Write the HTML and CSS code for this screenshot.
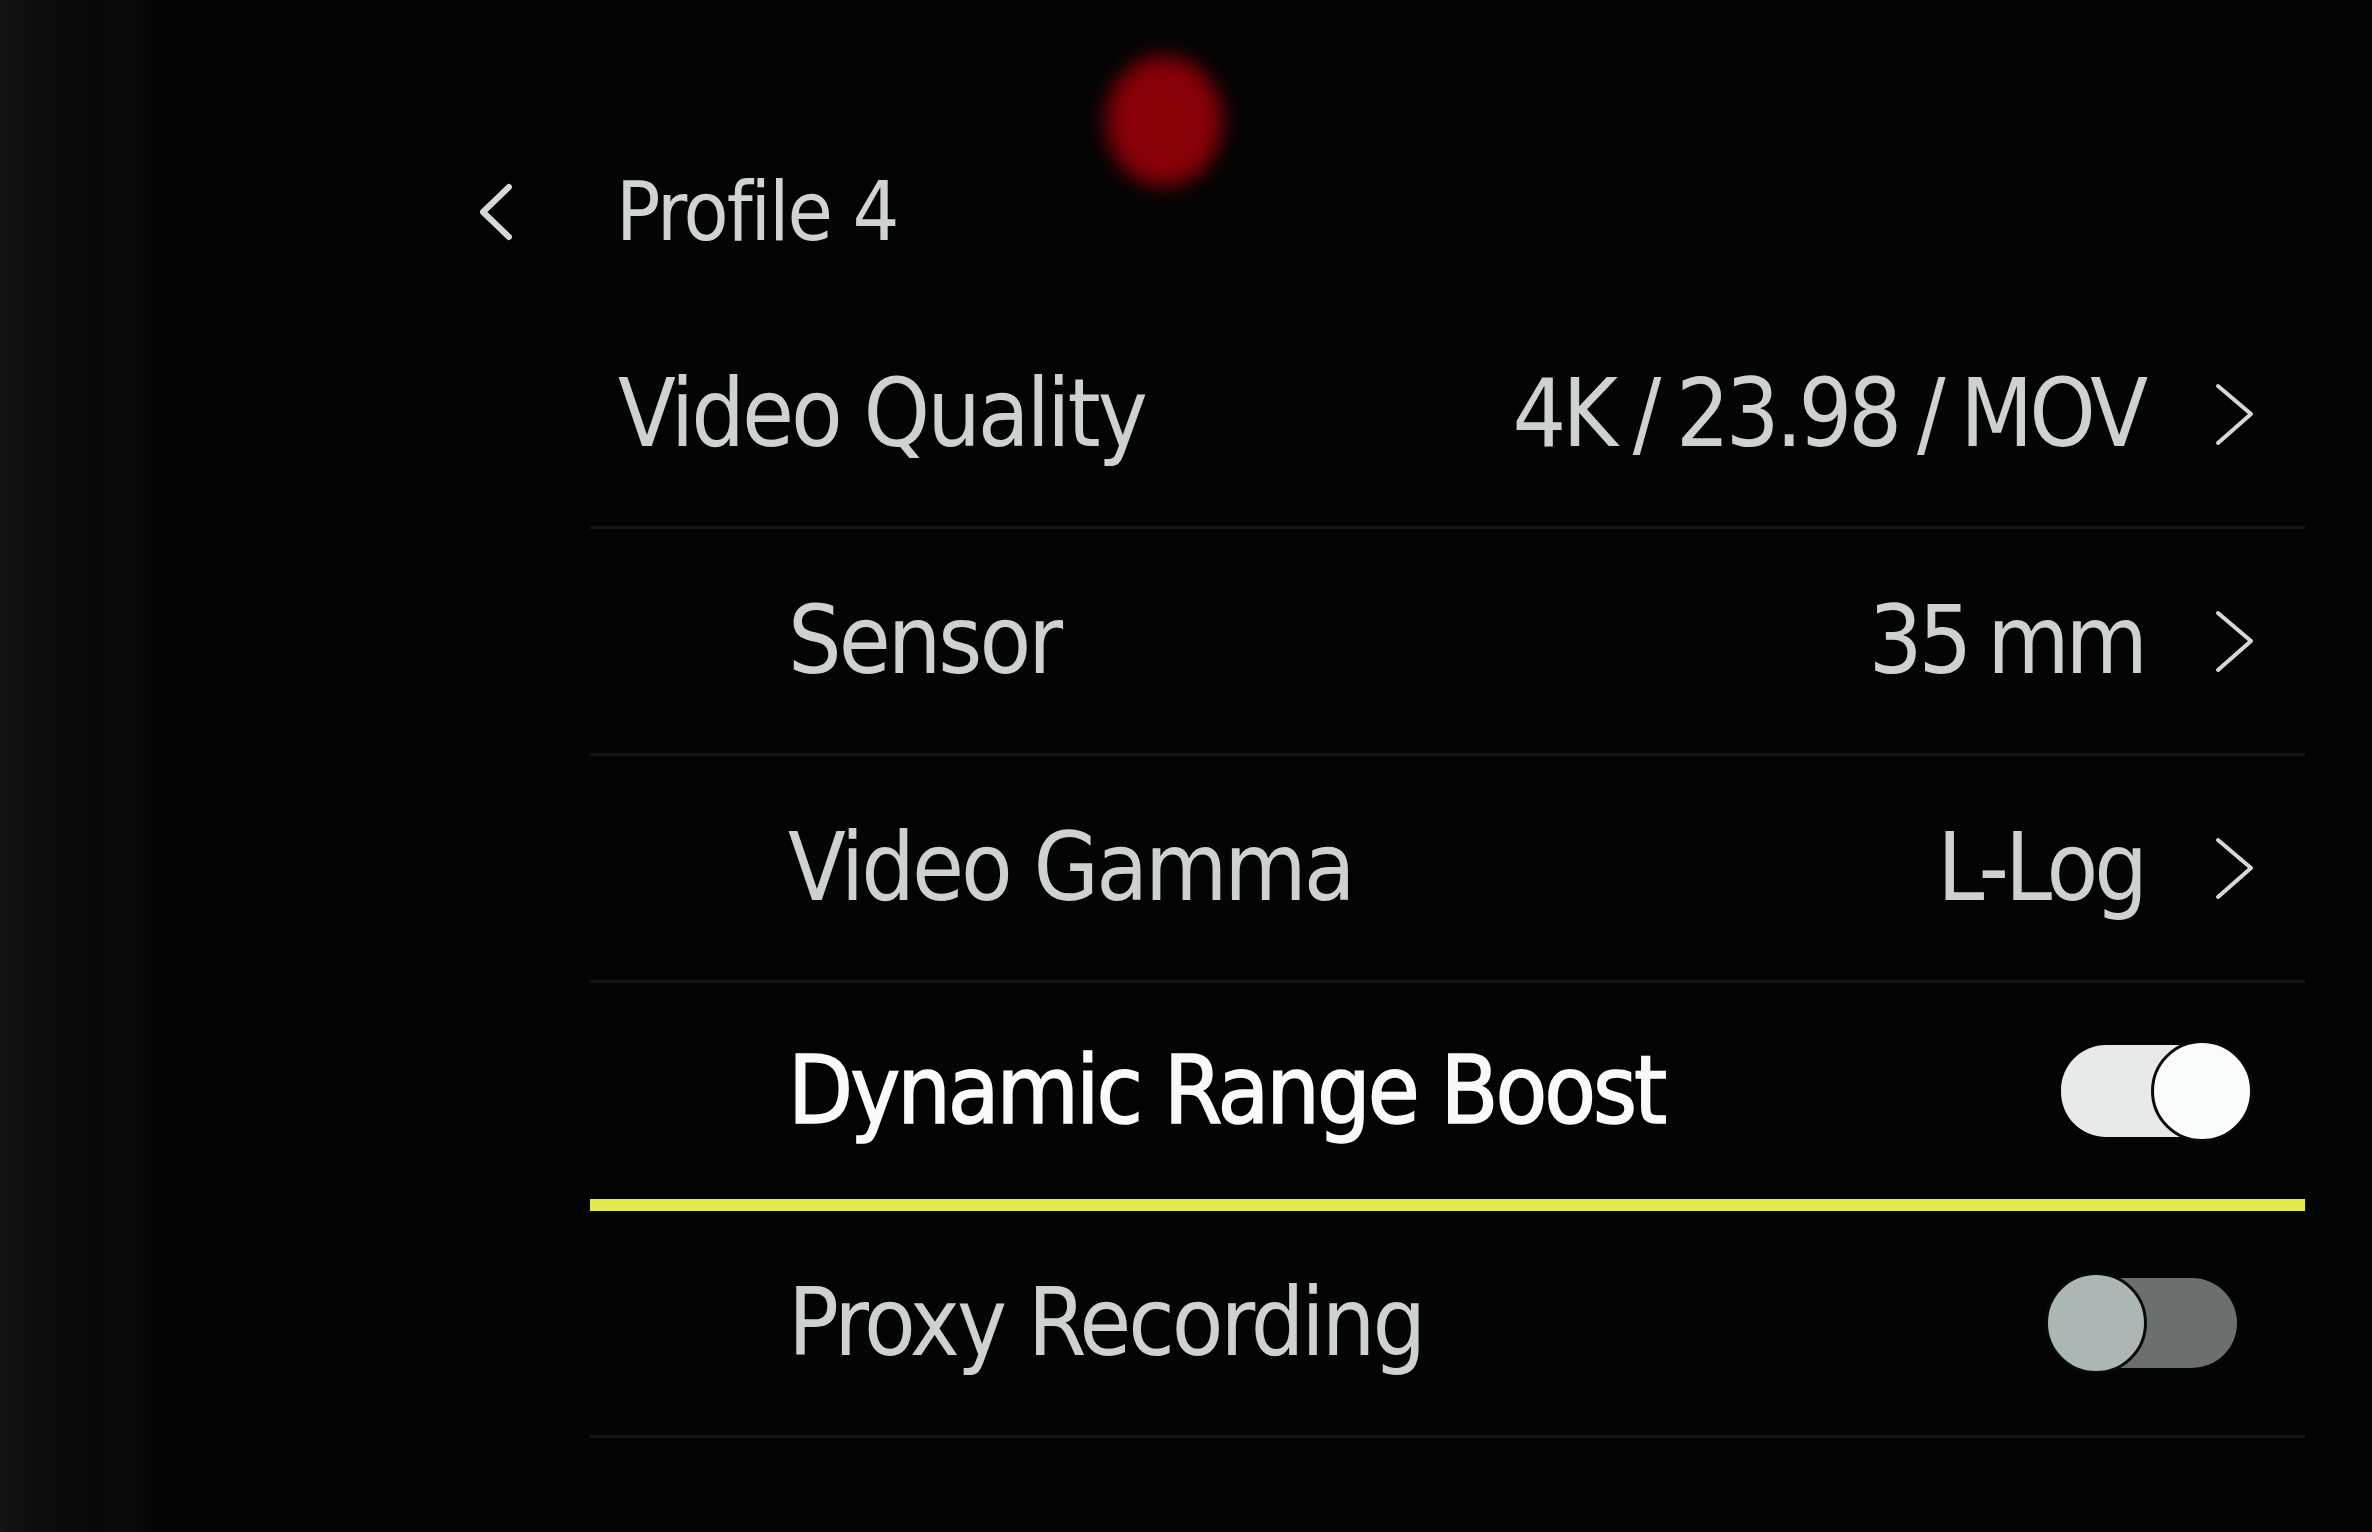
FILE: index.html
```html
<!DOCTYPE html>
<html lang="en">
<head>
    <meta charset="UTF-8">
    <meta name="viewport" content="width=device-width, initial-scale=1.0">
    <title>Profile 4</title>
    <link rel="stylesheet" href="styles.css">
</head>
<body>
    <div class="screen">
        <div class="rec-dot"></div>

        <div class="menu">
            <div class="menu-header">
                <svg class="back" viewBox="0 0 36 60" width="36" height="60">
                    <polyline points="31,5 5,30 31,55" />
                </svg>
                <span class="title">Profile 4</span>
            </div>

            <div class="row">
                <span class="label">Video Quality</span>
                <span class="value">4K / 23.98 / MOV</span>
                <svg class="chevron" viewBox="0 0 41 63" width="41" height="63">
                    <polyline points="4,3 37,31 4,60" />
                </svg>
            </div>

            <div class="row sub">
                <span class="label">Sensor</span>
                <span class="value">35 mm</span>
                <svg class="chevron" viewBox="0 0 41 63" width="41" height="63">
                    <polyline points="4,3 37,31 4,60" />
                </svg>
            </div>

            <div class="row sub">
                <span class="label">Video Gamma</span>
                <span class="value">L-Log</span>
                <svg class="chevron" viewBox="0 0 41 63" width="41" height="63">
                    <polyline points="4,3 37,31 4,60" />
                </svg>
            </div>

            <div class="row sub selected">
                <span class="label">Dynamic Range Boost</span>
                <span class="toggle on"><span class="knob"></span></span>
            </div>

            <div class="row sub">
                <span class="label">Proxy Recording</span>
                <span class="toggle"><span class="knob"></span></span>
            </div>
        </div>
    </div>
</body>
</html>
```

FILE: styles.css
```css
* {
    box-sizing: border-box;
    margin: 0;
    padding: 0;
}

body {
    width: 2372px;
    height: 1532px;
    overflow: hidden;
    background: #040404;
    font-family: "DejaVu Sans Condensed", "DejaVu Sans", sans-serif;
    font-stretch: condensed;
    color: #cdd2d1;
}

.screen {
    position: relative;
    height: 100%;
    padding: 122px 0 0 478px;
    background:
        linear-gradient(to right, #151515 0, #0c0c0c 35px, #080808 100px, #0b0b0b 125px, #050505 150px, #040404 400px);
}

/* recording indicator, blurred like in the photo */
.rec-dot {
    position: absolute;
    left: 1106px;
    top: 56px;
    width: 116px;
    height: 130px;
    border-radius: 50%;
    background: #880008;
    filter: blur(10px);
}

.menu {
    width: 1827px;
}

.menu-header {
    display: flex;
    align-items: center;
    height: 180px;
    gap: 102px;
}

.back polyline,
.chevron polyline {
    fill: none;
    stroke: #d4d8d7;
    stroke-linecap: round;
    stroke-linejoin: round;
}

.back polyline {
    stroke-width: 6;
}

.title {
    font-size: 82px;
    line-height: 1;
    letter-spacing: -2px;
    color: #cfd3d2;
}

.row {
    display: flex;
    align-items: center;
    height: 227px;
    margin-left: 112px;
    padding: 0 50px 0 28px;
    border-bottom: 3px solid #161616;
}

.row.sub {
    padding-left: 198px;
}

.row.selected {
    height: 228px;
    border-bottom: 12px solid #e3ec4c;
}

.label {
    font-size: 94px;
    line-height: 1;
    letter-spacing: -3px;
}

.selected .label {
    color: #f8fbfa;
    -webkit-text-stroke: 1.5px #f8fbfa;
}

.value {
    margin-left: auto;
    margin-right: 70px;
    font-size: 94px;
    line-height: 1;
    letter-spacing: -4px;
    word-spacing: -4px;
}

.chevron polyline {
    stroke-width: 4;
}

.toggle {
    position: relative;
    margin-left: auto;
    margin-right: 18px;
    width: 186px;
    height: 90px;
    border-radius: 45px;
    background: #6b706f;
}

.toggle.on {
    margin-right: 8px;
    height: 92px;
    background: #e7eae9;
}

.knob {
    position: absolute;
    top: -6px;
    left: -6px;
    width: 102px;
    height: 102px;
    border-radius: 50%;
    border: 3px solid #0a0a0a;
    background: #acb6b4;
}

.toggle.on .knob {
    top: -5px;
    left: auto;
    right: -6px;
    background: #f9fcfb;
}
```
